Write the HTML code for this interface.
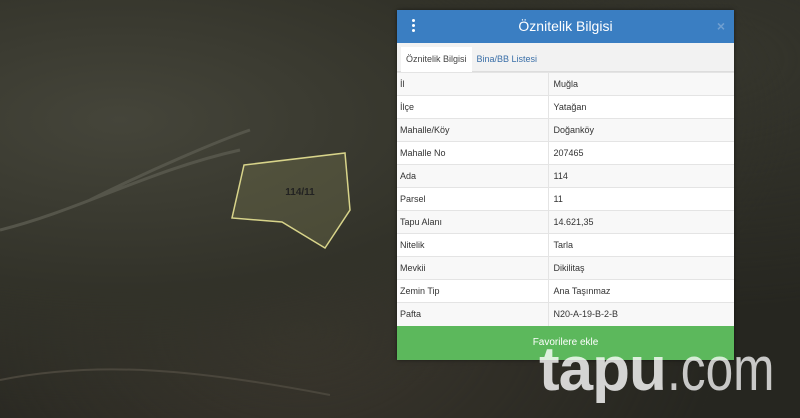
<!DOCTYPE html>
<html><head><meta charset="utf-8"><style>
*{margin:0;padding:0;box-sizing:border-box}
body{width:800px;height:418px;overflow:hidden;position:relative;font-family:"Liberation Sans",sans-serif;
background:radial-gradient(ellipse at 120px 120px,#45453a 0,#323229 40%,transparent 70%),radial-gradient(ellipse at 300px 330px,#3a362d 0,transparent 60%),radial-gradient(ellipse at 700px 60px,#36362d 0,transparent 50%),#262620}
.panel{position:absolute;left:397px;top:10px;width:337px;background:#fff;box-shadow:0 0 4px rgba(0,0,0,.5)}
.hd{height:33px;background:#3a7ec2;color:#fff;font-size:14px;text-align:center;line-height:33px;position:relative}
.hd .m{position:absolute;left:15px;top:9px;width:3px}
.hd .m i{display:block;width:3px;height:3px;background:#fff;border-radius:50%;margin-bottom:2px}
.hd .x{position:absolute;right:9px;top:0;color:#6f9fd0;font-size:14px;font-weight:bold}
.tabs{height:29px;background:#f2f2f2;border-bottom:1px solid #ddd;padding:4px 0 0 4px;font-size:9px}
.tabs span{display:inline-block;height:25px;line-height:24px;padding:0 5px}
.tabs .a{background:#fff;color:#444}
.tabs .b{color:#3a6fa8}
table{width:100%;border-collapse:collapse;font-size:9px;color:#333}
td{height:23px;border-top:1px solid #e4e4e4;padding-left:3px}
td+td{border-left:1px solid #e4e4e4;padding-left:5px;width:186px}
tr:nth-child(odd){background:#f8f8f8}
.btn{height:34px;background:#5cb85c;color:#fff;font-size:10px;text-align:center;line-height:34px}
.wm{position:absolute;z-index:5;left:539px;top:339px;font-size:62px;color:rgba(255,255,255,.8);line-height:1;white-space:nowrap}
.wm b{font-weight:bold;letter-spacing:-1px}
.wm span{display:inline-block;font-weight:normal;color:rgba(255,255,255,.75);transform:scaleX(.8);transform-origin:left;margin-left:1px}
</style></head><body>
<svg width="800" height="418" style="position:absolute;left:0;top:0">
<path d="M0 230 C80 210 150 170 240 150 M90 200 C150 170 220 140 250 130" stroke="#55554a" stroke-width="3" fill="none"/>
<path d="M0 380 C100 360 200 370 330 395" stroke="#4a463c" stroke-width="2" fill="none"/>
<path d="M244 165 L345 153 L350 210 L325 248 L282 222 L232 218 Z" fill="rgba(120,120,80,.35)" stroke="#d8d48a" stroke-width="1.5"/>
<text x="300" y="195" font-family="Liberation Sans" font-size="10" font-weight="bold" fill="#222" text-anchor="middle">114/11</text>
</svg>
<div class="panel">
<div class="hd"><div class="m"><i></i><i></i><i></i></div>Öznitelik Bilgisi<span class="x">×</span></div>
<div class="tabs"><span class="a">Öznitelik Bilgisi</span><span class="b">Bina/BB Listesi</span></div>
<table>
<tr><td>İl</td><td>Muğla</td></tr>
<tr><td>İlçe</td><td>Yatağan</td></tr>
<tr><td>Mahalle/Köy</td><td>Doğanköy</td></tr>
<tr><td>Mahalle No</td><td>207465</td></tr>
<tr><td>Ada</td><td>114</td></tr>
<tr><td>Parsel</td><td>11</td></tr>
<tr><td>Tapu Alanı</td><td>14.621,35</td></tr>
<tr><td>Nitelik</td><td>Tarla</td></tr>
<tr><td>Mevkii</td><td>Dikilitaş</td></tr>
<tr><td>Zemin Tip</td><td>Ana Taşınmaz</td></tr>
<tr><td>Pafta</td><td>N20-A-19-B-2-B</td></tr>
</table>
<div class="btn">Favorilere ekle</div>
</div>
<div class="wm"><b>tapu</b><span>.com</span></div>
</body></html>
